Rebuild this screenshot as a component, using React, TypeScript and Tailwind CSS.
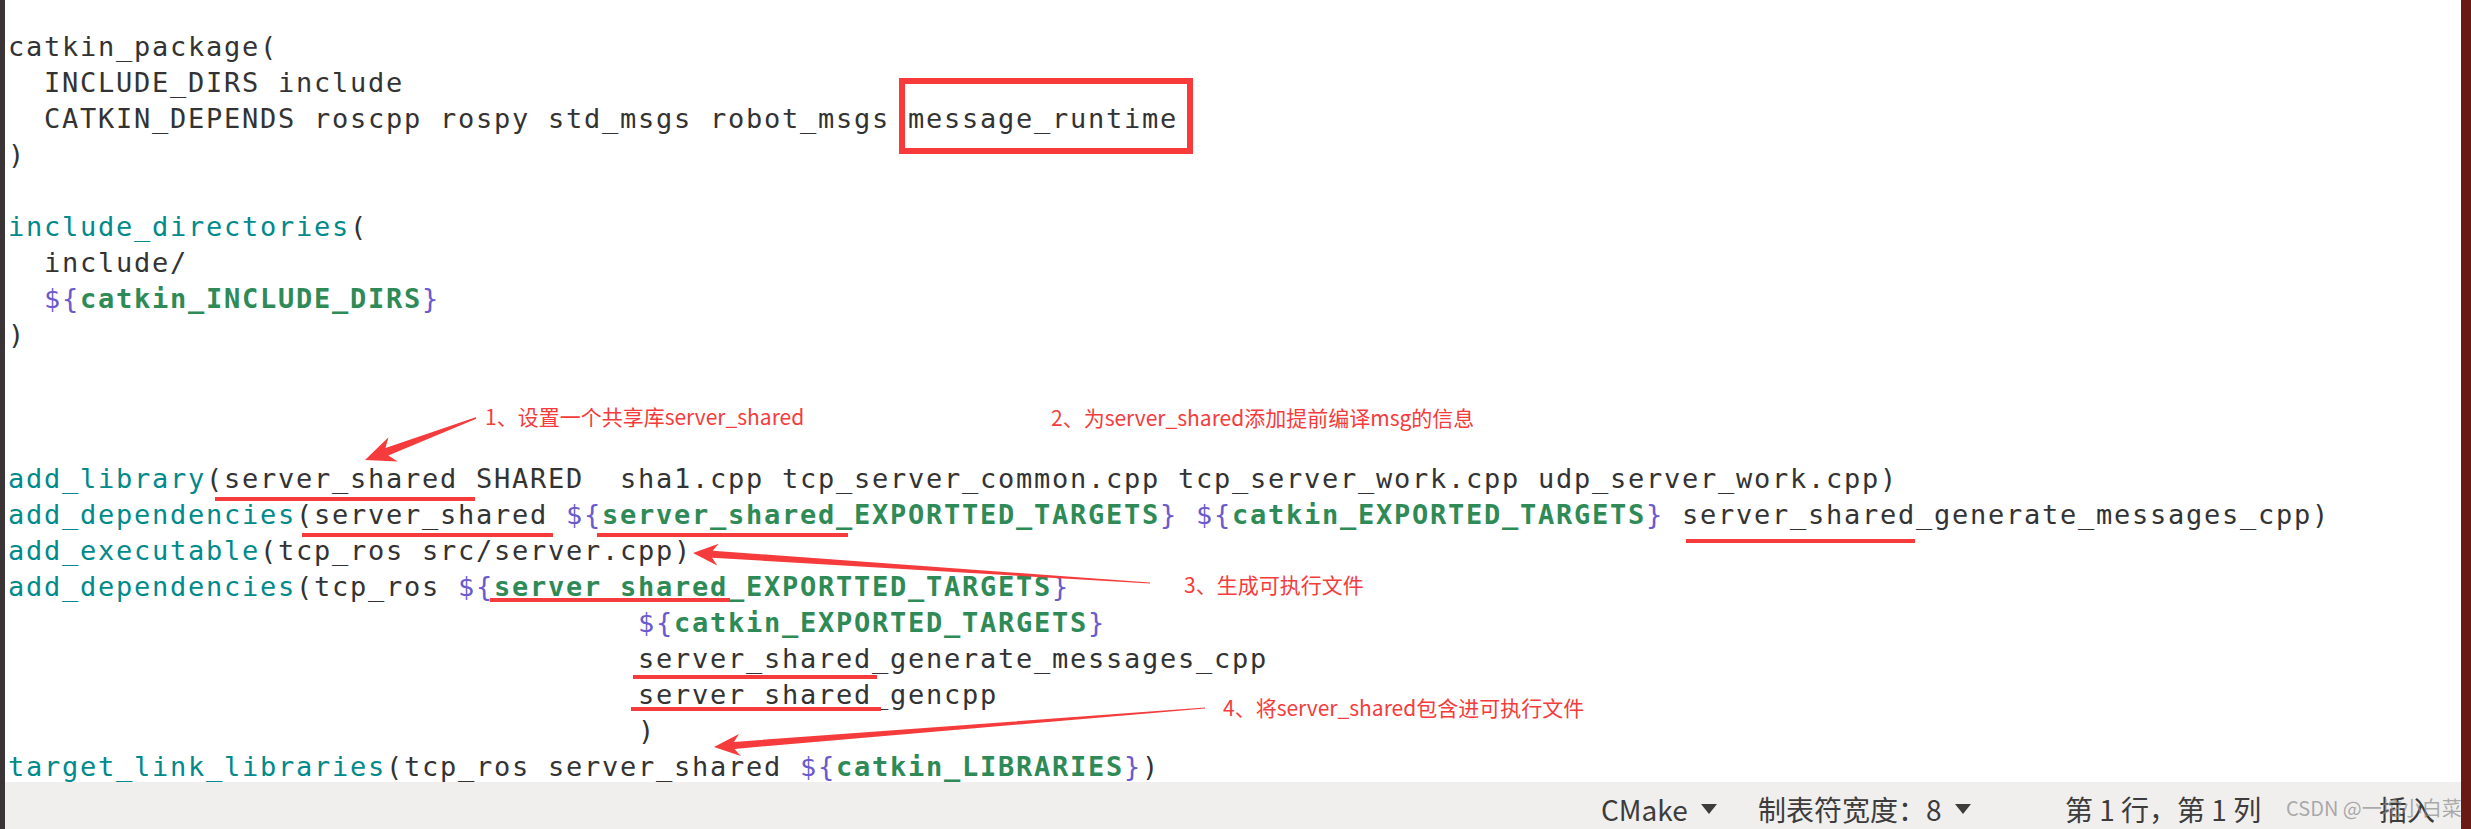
import React from "react";

type Seg = [string, string];

const T = "text-[#333333]";
const F = "text-[#008a8c]";
const S = "text-[#6a5acd]";
const G = "text-[#2e8b57] font-bold";

const IND = " ".repeat(35);

const lines: Seg[][] = [
  [[T, "catkin_package("]],
  [[T, "  INCLUDE_DIRS include"]],
  [[T, "  CATKIN_DEPENDS roscpp rospy std_msgs robot_msgs message_runtime"]],
  [[T, ")"]],
  [],
  [[F, "include_directories"], [T, "("]],
  [[T, "  include/"]],
  [[T, "  "], [S, "${"], [G, "catkin_INCLUDE_DIRS"], [S, "}"]],
  [[T, ")"]],
  [],
  [],
  [],
  [[F, "add_library"], [T, "(server_shared SHARED  sha1.cpp tcp_server_common.cpp tcp_server_work.cpp udp_server_work.cpp)"]],
  [
    [F, "add_dependencies"],
    [T, "(server_shared "],
    [S, "${"],
    [G, "server_shared_EXPORTTED_TARGETS"],
    [S, "}"],
    [T, " "],
    [S, "${"],
    [G, "catkin_EXPORTED_TARGETS"],
    [S, "}"],
    [T, " server_shared_generate_messages_cpp)"],
  ],
  [[F, "add_executable"], [T, "(tcp_ros src/server.cpp)"]],
  [[F, "add_dependencies"], [T, "(tcp_ros "], [S, "${"], [G, "server_shared_EXPORTTED_TARGETS"], [S, "}"]],
  [[T, IND], [S, "${"], [G, "catkin_EXPORTED_TARGETS"], [S, "}"]],
  [[T, IND + "server_shared_generate_messages_cpp"]],
  [[T, IND + "server_shared_gencpp"]],
  [[T, IND + ")"]],
  [[F, "target_link_libraries"], [T, "(tcp_ros server_shared "], [S, "${"], [G, "catkin_LIBRARIES"], [S, "}"], [T, ")"]],
];

const RED = "#f53b3b";

function arrowPoints(
  tail: [number, number],
  tip: [number, number],
  headLen: number,
  headHalf: number,
  tailW: number,
  neckW: number
) {
  const dx = tip[0] - tail[0];
  const dy = tip[1] - tail[1];
  const len = Math.hypot(dx, dy);
  const ux = dx / len;
  const uy = dy / len;
  const nx = -uy;
  const ny = ux;
  const bx = tip[0] - ux * headLen;
  const by = tip[1] - uy * headLen;
  const bx2 = tip[0] - ux * (headLen * 0.78);
  const by2 = tip[1] - uy * (headLen * 0.78);
  const pts: [number, number][] = [
    [tail[0] + (nx * tailW) / 2, tail[1] + (ny * tailW) / 2],
    [bx2 + (nx * neckW) / 2, by2 + (ny * neckW) / 2],
    [bx + nx * headHalf, by + ny * headHalf],
    [tip[0], tip[1]],
    [bx - nx * headHalf, by - ny * headHalf],
    [bx2 - (nx * neckW) / 2, by2 - (ny * neckW) / 2],
    [tail[0] - (nx * tailW) / 2, tail[1] - (ny * tailW) / 2],
  ];
  return pts.map((p) => p[0].toFixed(1) + "," + p[1].toFixed(1)).join(" ");
}

function Tri() {
  return (
    <svg width="18" height="12" viewBox="0 0 18 12" className="inline-block">
      <polygon points="1,1 17,1 9,11" fill="#3c3c3c" />
    </svg>
  );
}

const underlines: [number, number, number][] = [
  [215, 475, 499],
  [302, 553, 535],
  [597, 848, 535],
  [1686, 1915, 541],
  [490, 730, 600],
  [633, 877, 677],
  [631, 881, 709],
];

export default function App() {
  return (
    <div className="relative w-[2471px] h-[829px] flex flex-row overflow-hidden bg-white">
      <div className="w-[5px] h-full bg-[#3b3437]" />
      <div className="flex-1 flex flex-col min-w-0">
        <div
          className="flex-1 bg-white pl-[3px] pt-[29px] text-[27px] leading-[36px] tracking-[1.744px] overflow-hidden"
          style={{ fontFamily: '"DejaVu Sans Mono", "Liberation Mono", monospace' }}
        >
          {lines.map((segs, i) => (
            <div key={i} className="h-[36px] whitespace-pre">
              {segs.map(([cls, txt], j) => (
                <span key={j} className={cls}>
                  {txt}
                </span>
              ))}
            </div>
          ))}
        </div>
        <div
          className="h-[47px] bg-[#f0efee] flex flex-row items-center justify-end pr-[18px] pt-[6px] text-[28px] text-[#3c3c3c]"
          style={{ fontFamily: '"Noto Sans CJK SC", "Noto Sans", sans-serif' }}
        >
          <div className="w-[157px] flex items-center gap-[12px]">
            <span>CMake</span>
            <Tri />
          </div>
          <div className="w-[307px] flex items-center gap-[12px]">
            <span>制表符宽度：8</span>
            <Tri />
          </div>
          <div className="w-[314px] flex items-center">
            <span className="whitespace-pre">第 1 行，第 1 列</span>
          </div>
          <div className="w-[64px] flex items-center">
            <span>插入</span>
          </div>
        </div>
      </div>
      <div className="w-[10px] h-full bg-[#6a1a14]" />

      <svg className="absolute left-0 top-0 pointer-events-none" width="2471" height="829" viewBox="0 0 2471 829">
        {underlines.map(([x1, x2, y], i) => (
          <rect key={i} x={x1} y={y - 2} width={x2 - x1} height={4} fill={RED} />
        ))}
        <polygon points={arrowPoints([476, 418], [365, 460], 30, 13, 1.5, 8)} fill={RED} />
        <polygon points={arrowPoints([1150, 583], [693, 553], 25, 11, 1, 7)} fill={RED} />
        <polygon points={arrowPoints([1205, 708], [714, 747], 26, 11, 1, 7)} fill={RED} />
      </svg>

      <div className="absolute left-[899px] top-[78px] w-[294px] h-[76px] border-[6px] border-[#f93a3a]" />

      <div
        className="absolute inset-0 pointer-events-none text-[21px] text-[#f53b3b] leading-none"
        style={{ fontFamily: '"Noto Sans CJK SC", "Noto Sans", sans-serif' }}
      >
        <div className="absolute left-[485px] top-[406px] whitespace-pre">1、设置一个共享库server_shared</div>
        <div className="absolute left-[1051px] top-[407px] whitespace-pre">2、为server_shared添加提前编译msg的信息</div>
        <div className="absolute left-[1184px] top-[574px] whitespace-pre">3、生成可执行文件</div>
        <div className="absolute left-[1223px] top-[697px] whitespace-pre">4、将server_shared包含进可执行文件</div>
      </div>

      <div
        className="absolute left-[2286px] top-[798px] text-[20px] leading-none text-[#8a8a8a]/70 whitespace-pre"
        style={{ fontFamily: '"Noto Sans CJK SC", "Noto Sans", sans-serif' }}
      >
        CSDN @一坨小白菜
      </div>
    </div>
  );
}
